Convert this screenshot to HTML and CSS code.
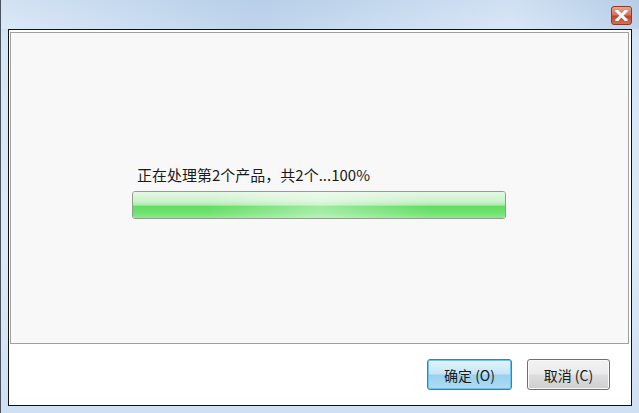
FILE: index.html
```html
<!DOCTYPE html>
<html lang="zh">
<head>
    <meta charset="UTF-8">
    <title>处理中</title>
    <link rel="stylesheet" href="styles.css">
</head>
<body>

<div class="window">
    <div class="titlebar">
        <div class="close">
            <svg width="13" height="11" viewBox="0 0 13 11">
                <path d="M2 1 L11 10 M11 1 L2 10" stroke="#fff" stroke-width="3" stroke-linecap="square"/>
            </svg>
        </div>
    </div>
    <div class="client">
        <div class="panel">
            <div class="status">正在处理第2个产品，共2个...100%</div>
            <div class="progress">
                <div class="progress-fill"></div>
            </div>
        </div>
        <div class="footer">
            <button class="btn btn-default">确定 (O)</button>
            <button class="btn">取消 (C)</button>
        </div>
    </div>
</div>

</body>
</html>
```

FILE: styles.css
```css
html, body {
    margin: 0;
    padding: 0;
}

body {
    width: 639px;
    height: 413px;
    overflow: hidden;
    font-family: "Noto Sans CJK SC", "Noto Sans", sans-serif;
}

.window {
    width: 639px;
    height: 413px;
    box-sizing: border-box;
    display: flex;
    flex-direction: column;
    padding: 0 7px 7px 7px;
    background: linear-gradient(180deg, #c3d8ef 0%, #d6e5f5 10%, #dde9f6 60%, #cfe0f2 100%);
    border-left: 1px solid #4a5360;
}

.titlebar {
    height: 29px;
    display: flex;
    justify-content: flex-end;
    align-items: flex-start;
    background: linear-gradient(90deg, rgba(255,255,255,0.25), rgba(160,190,220,0.35) 40%, rgba(255,255,255,0.2) 80%, rgba(150,180,210,0.3));
    margin: 0 -7px 0 -7px;
    padding-right: 7px;
}

.close {
    width: 21px;
    height: 19px;
    margin-top: 6px;
    box-sizing: border-box;
    border: 1px solid #8a3b2b;
    border-radius: 3px;
    background: linear-gradient(180deg, #e8a492 0%, #d7735c 45%, #c2432a 55%, #d3705a 100%);
    display: flex;
    justify-content: center;
    align-items: center;
}

.client {
    flex: 1;
    border: 1px solid #111;
    background: #fff;
    padding: 2px 2px 2px 1px;
    display: flex;
    flex-direction: column;
}

.panel {
    height: 312px;
    border: 1px solid #a0a0a0;
    background: #f8f8f8;
    padding: 133px 0 0 121px;
    box-sizing: border-box;
}

.status {
    font-size: 15px;
    line-height: 18px;
    color: #1a1a1a;
    padding-left: 5px;
}

.progress {
    width: 374px;
    height: 28px;
    margin-top: 7px;
    box-sizing: border-box;
    border: 1px solid #8fa08f;
    border-radius: 3px;
    background: #e6e6e6;
    overflow: hidden;
}

.progress-fill {
    height: 100%;
    background:
        linear-gradient(90deg, rgba(255,255,255,0) 20%, rgba(255,255,255,0.4) 50%, rgba(255,255,255,0) 80%),
        linear-gradient(180deg, #e4f8e4 0%, #cdf2cd 35%, #b0ebb0 50%, #62dc62 55%, #6fe26f 80%, #8ee88e 100%);
}

.footer {
    flex: 1;
    display: flex;
    justify-content: flex-end;
    align-items: flex-start;
    gap: 15px;
    padding: 15px 19px 0 0;
}

.btn {
    width: 83px;
    height: 31px;
    font-family: "Noto Sans CJK SC", "Noto Sans", sans-serif;
    font-size: 14px;
    color: #1a1a1a;
    border: 1px solid #707070;
    border-radius: 3px;
    background: linear-gradient(180deg, #f2f2f2 0%, #ebebeb 48%, #dddddd 52%, #cfcfcf 100%);
    box-shadow: inset 0 0 0 1px #fafafa;
    padding: 0;
}

.btn-default {
    width: 85px;
    border-color: #3c7fb1;
    background: linear-gradient(180deg, #e5f4fc 0%, #c4e5f6 48%, #98d1ef 52%, #b0dcf2 100%);
    box-shadow: inset 0 0 0 1px #6cc4ec;
}
```
